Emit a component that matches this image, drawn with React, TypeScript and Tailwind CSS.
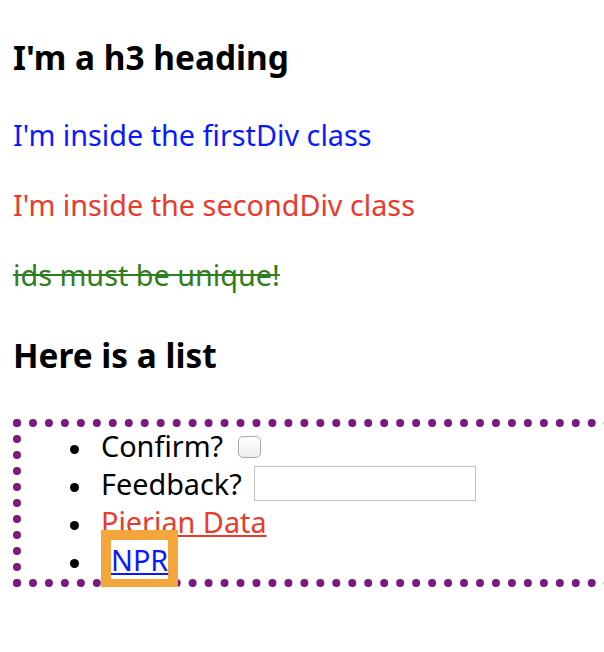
import React from "react";

function Bullet() {
  return <span className="-ml-[31px] mr-[22px] inline-block h-[9px] w-[9px] rounded-full bg-black align-middle" />;
}

export default function App() {
  return (
    <div className="w-full overflow-hidden bg-white">
      <div
        className="w-[660px] pl-[13px] pt-px text-black"
        style={{ fontFamily: '"Noto Sans", "Noto Sans CJK KR", sans-serif' }}
      >
        <h3 className="mt-[36px] text-[33.4px] font-bold leading-[40px]">I'm a h3 heading</h3>
        <p className="mt-[39px] text-[28.8px] leading-[38px] text-[#0a1aff]">I'm inside the firstDiv class</p>
        <p className="mt-[32px] text-[28.8px] leading-[38px] text-[#ea3a2a]">I'm inside the secondDiv class</p>
        <p className="mt-[32px] text-[28.8px] leading-[38px] text-[#2f7d20] line-through">ids must be unique!</p>
        <h3 className="mt-[41px] text-[33.4px] font-bold leading-[40px]">Here is a list</h3>
        <ul className="mt-[44px] list-none border-[8px] border-dotted border-[#791a7d] pl-[80px] text-[28.8px] leading-[38px]">
          <li>
            <Bullet />
            Confirm?{" "}
            <input
              type="checkbox"
              className="ml-[7px] mt-[9px] inline-block h-[22px] w-[23px] appearance-none rounded-[5px] border border-[#a9a9a9] bg-gradient-to-b from-white to-[#ececec] align-top"
            />
          </li>
          <li>
            <Bullet />
            Feedback?{" "}
            <input
              type="text"
              className="ml-[5px] mt-[1px] inline-block h-[35px] w-[222px] border border-[#c2c2c2] bg-white align-top"
            />
          </li>
          <li>
            <Bullet />
            <a href="#" className="text-[#ea3a2a] underline">Pierian Data</a>
          </li>
          <li>
            <Bullet />
            <a href="#" className="border-[10px] border-[#f2a63c] text-[#0a1aff] underline">NPR</a>
          </li>
        </ul>
      </div>
    </div>
  );
}
